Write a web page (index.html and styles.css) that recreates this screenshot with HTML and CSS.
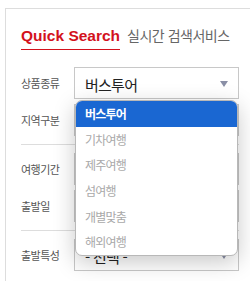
FILE: index.html
```html
<!DOCTYPE html>
<html lang="ko">
<head>
<meta charset="utf-8">
<title>Quick Search</title>
<link rel="stylesheet" href="styles.css">
</head>
<body>
<div class="panel">
  <div class="title">
    <span class="title-en">Quick Search</span>
    <span class="title-ko">실시간 검색서비스</span>
  </div>
  <div class="form">
    <div class="group">
      <div class="row">
        <span class="label">상품종류</span>
        <div class="select-wrap">
          <div class="select"><span class="value">버스투어</span><span class="arrow"></span></div>
          <ul class="dropdown">
            <li class="option selected">버스투어</li>
            <li class="option">기차여행</li>
            <li class="option">제주여행</li>
            <li class="option">섬여행</li>
            <li class="option">개별맞춤</li>
            <li class="option">해외여행</li>
          </ul>
        </div>
      </div>
      <div class="row">
        <span class="label">지역구분</span>
        <div class="select-wrap">
          <div class="select"><span class="value covered">- 선택 -</span><span class="arrow"></span></div>
        </div>
      </div>
    </div>
    <div class="group">
      <div class="row">
        <span class="label">여행기간</span>
        <div class="select-wrap">
          <div class="select"><span class="value covered">- 선택 -</span><span class="arrow"></span></div>
        </div>
      </div>
      <div class="row">
        <span class="label">출발일</span>
        <div class="select-wrap">
          <div class="select"><span class="value covered">- 선택 -</span><span class="arrow"></span></div>
        </div>
      </div>
    </div>
    <div class="group">
      <div class="row">
        <span class="label">출발특성</span>
        <div class="select-wrap">
          <div class="select"><span class="value">- 선택 -</span><span class="arrow"></span></div>
        </div>
      </div>
    </div>
  </div>
</div>
</body>
</html>
```

FILE: styles.css
```css
html, body {
  margin: 0;
  padding: 0;
  background: #fff;
  overflow: hidden;
}
body {
  font-family: "Noto Sans CJK KR", "Noto Sans", sans-serif;
}
.panel {
  margin: 8px 0 0 5px;
  border-top: 1px solid #dddddd;
  border-left: 1px solid #dddddd;
  padding: 16px 11px 10px 15px;
}
.title {
  display: flex;
  align-items: baseline;
  gap: 7px;
}
.title-en {
  font-family: "Liberation Sans", Arial, sans-serif;
  font-weight: bold;
  font-size: 15.5px;
  line-height: 20px;
  color: #d3111c;
  padding-bottom: 3px;
  border-bottom: 1px solid #d3111c;
}
.title-ko {
  font-size: 14px;
  line-height: 20px;
  letter-spacing: -0.5px;
  color: #666;
}
.form {
  margin-top: 17px;
}
.group {
  padding: 8px 0;
  border-bottom: 1px solid #dddddd;
}
.group:first-child {
  padding-top: 0;
}
.group:last-child {
  border-bottom: none;
  padding-bottom: 0;
}
.row {
  display: flex;
  align-items: center;
  height: 32px;
}
.row + .row {
  margin-top: 5px;
}
.label {
  width: 53px;
  flex: none;
  font-size: 11px;
  letter-spacing: -0.5px;
  color: #555;
}
.select-wrap {
  position: relative;
  flex: 1;
  height: 32px;
}
.select {
  box-sizing: border-box;
  height: 32px;
  border: 1px solid #c8c8c8;
  background: #fff;
  display: flex;
  align-items: center;
  justify-content: space-between;
  padding: 2px 10px 0 10px;
}
.value {
  font-size: 15px;
  letter-spacing: -0.75px;
  color: #222;
}
.value.covered {
  visibility: hidden;
}
.arrow {
  width: 0;
  height: 0;
  border-left: 4.5px solid transparent;
  border-right: 4.5px solid transparent;
  border-top: 6px solid #8a8fa6;
}
.dropdown {
  position: absolute;
  top: calc(100% + 1px);
  left: 1px;
  right: 1px;
  z-index: 2;
  margin: 0;
  padding: 0;
  list-style: none;
  background: #fff;
  border: 1px solid #b8b8b8;
  border-radius: 7px;
  overflow: hidden;
  box-shadow: 0 6px 22px rgba(0, 0, 0, 0.22);
}
.option {
  height: 25.67px;
  line-height: 25.67px;
  padding-left: 9px;
  font-size: 12px;
  letter-spacing: -0.8px;
  color: #a9a9a9;
}
.option.selected {
  background: #1a67d2;
  color: #fff;
  font-weight: bold;
}
```
